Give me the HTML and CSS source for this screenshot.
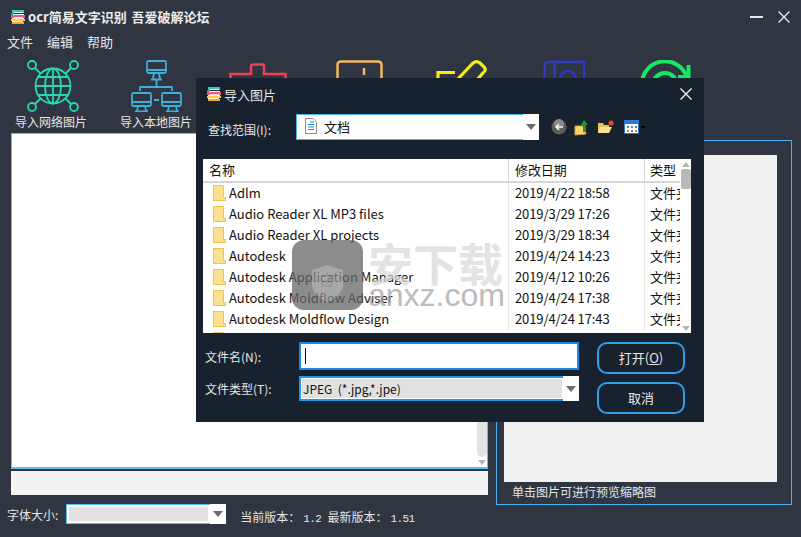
FILE: index.html
```html
<!DOCTYPE html>
<html>
<head>
  <title>ocr简易文字识别</title>
  <link rel="stylesheet" href="styles.css">
</head>
<body>
  <svg class="defs" width="0" height="0">
    <symbol id="logo" viewBox="0 0 14 14">
      <rect x="1" y="0" width="12" height="3" fill="#35c9b5"/>
      <rect x="3" y="2" width="9" height="1" fill="#dff"/>
      <rect x="0" y="3" width="3" height="2" fill="#2f8f96"/>
      <rect x="2" y="4" width="11" height="1" fill="#dfe"/>
      <rect x="0" y="5" width="14" height="3" fill="#f2557e"/>
      <rect x="3" y="7" width="9" height="1" fill="#fdd"/>
      <rect x="1" y="8" width="12" height="1" fill="#eee"/>
      <rect x="0" y="9" width="14" height="2" fill="#f8cd55"/>
      <rect x="1" y="11" width="11" height="1" fill="#fff2c0"/>
      <rect x="1" y="12" width="12" height="2" fill="#f5a73e"/>
    </symbol>
    <symbol id="folder" viewBox="0 0 13 16">
      <path d="M0 0H11V12H13V16H0Z" fill="#fbe08f"/>
      <path d="M.5 .5H10.5V12.5H12.5V15.5H.5Z" fill="none" stroke="#eec24e"/>
    </symbol>
  </svg>

  <div class="app">
    <div class="titlebar">
      <svg class="logo" width="14" height="14"><use href="#logo"/></svg>
      <span class="title">ocr简易文字识别 吾爱破解论坛</span>
      <span class="win-min"></span>
      <svg class="win-close" width="12" height="12" viewBox="0 0 12 12"><path d="M.5 .5L11.5 11.5M11.5 .5L.5 11.5" stroke="#e8e8e8" stroke-width="1.4"/></svg>
    </div>

    <div class="menu">
      <span>文件</span>
      <span>编辑</span>
      <span>帮助</span>
    </div>

    <div class="toolbar">
      <div class="tool">
        <svg width="52" height="52" viewBox="0 0 52 52" fill="none" stroke="#2ad6b6" stroke-width="1.8">
          <circle cx="26" cy="26" r="17.5"/>
          <ellipse cx="26" cy="26" rx="8" ry="17.5"/>
          <path d="M26 8.5V43.5M8.500 26H43.500M11 17H41M11 35H41"/>
          <circle cx="5" cy="5" r="4"/>
          <circle cx="47" cy="5" r="4"/>
          <circle cx="5" cy="47" r="4"/>
          <circle cx="47" cy="47" r="4"/>
          <path d="M8 8L14 14M44 8L38 14M8 44L14 38M44 44L38 38"/>
        </svg>
        <span>导入网络图片</span>
      </div>
      <div class="tool">
        <svg width="52" height="52" viewBox="0 0 52 52" fill="none" stroke="#3eafd6" stroke-width="1.800">
          <rect x="16" y="1" width="19" height="12" rx="1.500"/>
          <path d="M16 10H35M23 13L22 19M28 13L29 19M20 19.500H31M25.500 20V26M9 31V27H41V31"/>
          <rect x="1" y="33" width="19" height="13" rx="1.500"/>
          <rect x="31" y="33" width="19" height="13" rx="1.500"/>
          <path d="M1 42H20M31 42H50M7 46L6 51M14 46L15 51M4 51.500H17M38 46L37 51M45 46L46 51M35 51.500H48M23 40H28"/>
        </svg>
        <span>导入本地图片</span>
      </div>
      <div class="tool">
        <svg width="58" height="52" viewBox="0 0 58 52" fill="none" stroke="#ee4058" stroke-width="2.500">
          <path d="M1.500 24V14H22V6Q22 4.500 24 4.500H33Q35 4.500 35 6V14H56.500V24"/>
        </svg>
      </div>
      <div class="tool">
        <svg width="48" height="52" viewBox="0 0 48 52" fill="none" stroke="#f5b95d" stroke-width="2.500">
          <path d="M1.500 24V5Q1.500 1.500 5 1.500H42Q45.500 1.500 45.500 5V24"/>
          <path d="M28 8V15"/>
        </svg>
      </div>
      <div class="tool">
        <svg width="52" height="52" viewBox="0 0 52 52" fill="none" stroke="#f6ef0f" stroke-width="3.200">
          <path d="M3 24V12.500H20"/>
          <path d="M22 20L37 4Q41 0 45 3L49 7Q52 10 48 13L42 20"/>
        </svg>
      </div>
      <div class="tool">
        <svg width="44" height="52" viewBox="0 0 44 52" fill="none" stroke="#3339c6" stroke-width="2.400">
          <path d="M1.500 22V6Q1.500 2 5.500 2H41V22M11.500 2V22"/>
          <circle cx="25" cy="19" r="8"/>
        </svg>
      </div>
      <div class="tool">
        <svg width="52" height="52" viewBox="0 0 52 52" fill="none" stroke="#16e765" stroke-width="4">
          <path d="M3 26A23 23 0 0 1 47 15"/>
          <path d="M49.500 5V17H39"/>
          <circle cx="26" cy="25" r="12"/>
        </svg>
      </div>
    </div>

    <div class="work">
      <div class="left">
        <div class="editor">
          <div class="vscroll">
            <div class="thumb"></div>
            <div class="arrow"></div>
          </div>
        </div>
        <div class="status"></div>
        <div class="footer">
          <span>字体大小:</span>
          <div class="combo font-combo">
            <div class="combo-field"></div>
            <div class="combo-btn"><i></i></div>
          </div>
          <span class="version">当前版本：<span class="num">1.2</span>最新版本：<span class="num">1.51</span></span>
        </div>
      </div>
      <div class="preview">
        <div class="preview-img"></div>
        <div class="preview-tip">单击图片可进行预览缩略图</div>
      </div>
    </div>

    <!-- 导入图片对话框 -->
    <div class="dialog">
      <div class="dlg-title">
        <svg width="14" height="14"><use href="#logo"/></svg>
        <span>导入图片</span>
        <svg class="dlg-close" width="12" height="12" viewBox="0 0 12 12"><path d="M.5 .5L11.5 11.5M11.5 .5L.5 11.5" stroke="#f0f0f0" stroke-width="1.400"/></svg>
      </div>

      <div class="look-row">
        <span class="look-label">查找范围(I):</span>
        <div class="combo look-combo">
          <div class="look-field">
            <svg width="12" height="16" viewBox="0 0 12 16">
              <path d="M.5 .5H8L11.500 4V15.500H.5Z" fill="#fff" stroke="#8a8a8a"/>
              <path d="M5 4H9M3 6.500H9M3 9H9M3 11.500H9" stroke="#1e8fdc" stroke-width="1.200"/>
            </svg>
            <span>文档</span>
          </div>
          <div class="combo-btn"><i></i></div>
        </div>
        <div class="look-tools">
          <svg width="16" height="16" viewBox="0 0 16 16">
            <circle cx="8" cy="8" r="7.500" fill="#5c5c5c"/>
            <circle cx="8" cy="5" r="5" fill="#8a8a8a"/>
            <path d="M12 8H5M8 5L5 8L8 11" fill="none" stroke="#f2f2f2" stroke-width="1.500"/>
          </svg>
          <svg width="16" height="17" viewBox="0 0 16 17">
            <path d="M1 7H10L12 15L1 16Z" fill="#f6d469" stroke="#c9a43a"/>
            <path d="M10 1L14 6H12V13H9V6H7Z" fill="#1f9a2a"/>
          </svg>
          <svg width="17" height="14" viewBox="0 0 17 14">
            <path d="M1 3H6L7 5H12V13H1Z" fill="#e6c25a"/>
            <path d="M3 7H15L12 13H1Z" fill="#fbe08f"/>
            <circle cx="14" cy="3" r="2.500" fill="#e8501c"/>
          </svg>
          <div class="view-btn">
            <svg width="15" height="14" viewBox="0 0 15 14">
              <rect x=".5" y=".5" width="14" height="13" fill="#fff" stroke="#2a78d2"/>
              <rect x="1" y="1" width="13" height="3" fill="#2a78d2"/>
              <path d="M3 6H5V8H3ZM7 6H9V8H7Z" fill="#5a78b8"/>
              <path d="M11 6H13V8H11Z" fill="#3a9a4a"/>
              <path d="M3 10H5V12H3Z" fill="#e87a30"/>
              <path d="M7 10H9V12H7Z" fill="#5a78b8"/>
              <path d="M11 10H13V12H11Z" fill="#e87a30"/>
            </svg>
            <i></i>
          </div>
        </div>
      </div>

      <div class="filelist">
        <div class="row head">
          <div class="c-name">名称</div>
          <div class="c-date">修改日期</div>
          <div class="c-type">类型</div>
        </div>
        <div class="row"><div class="c-name"><svg width="13" height="16"><use href="#folder"/></svg>Adlm</div><div class="c-date">2019/4/22 18:58</div><div class="c-type">文件夹</div></div>
        <div class="row"><div class="c-name"><svg width="13" height="16"><use href="#folder"/></svg>Audio Reader XL MP3 files</div><div class="c-date">2019/3/29 17:26</div><div class="c-type">文件夹</div></div>
        <div class="row"><div class="c-name"><svg width="13" height="16"><use href="#folder"/></svg>Audio Reader XL projects</div><div class="c-date">2019/3/29 18:34</div><div class="c-type">文件夹</div></div>
        <div class="row"><div class="c-name"><svg width="13" height="16"><use href="#folder"/></svg>Autodesk</div><div class="c-date">2019/4/24 14:23</div><div class="c-type">文件夹</div></div>
        <div class="row"><div class="c-name"><svg width="13" height="16"><use href="#folder"/></svg>Autodesk Application Manager</div><div class="c-date">2019/4/12 10:26</div><div class="c-type">文件夹</div></div>
        <div class="row"><div class="c-name"><svg width="13" height="16"><use href="#folder"/></svg>Autodesk Moldflow Adviser</div><div class="c-date">2019/4/24 17:38</div><div class="c-type">文件夹</div></div>
        <div class="row"><div class="c-name"><svg width="13" height="16"><use href="#folder"/></svg>Autodesk Moldflow Design</div><div class="c-date">2019/4/24 17:43</div><div class="c-type">文件夹</div></div>
        <div class="row"><div class="c-name"><svg width="13" height="16"><use href="#folder"/></svg></div></div>
        <div class="list-scroll">
          <div class="arrow up"></div>
          <div class="list-thumb"></div>
          <div class="arrow"></div>
        </div>
      </div>

      <div class="dlg-bottom">
        <div class="dlg-fields">
          <div class="field-row">
            <span class="field-label">文件名(N):</span>
            <div class="name-input"><i></i></div>
          </div>
          <div class="field-row">
            <span class="field-label">文件类型(T):</span>
            <div class="combo type-combo">
              <div class="combo-field">JPEG&nbsp; (*.jpg,*.jpe)</div>
              <div class="combo-btn"><i></i></div>
            </div>
          </div>
        </div>
        <div class="dlg-btns">
          <div class="btn">打开(<u>O</u>)</div>
          <div class="btn">取消</div>
        </div>
      </div>
    </div>

    <!-- 水印 -->
    <div class="mark">
      <svg class="mark-lock" width="71" height="70" viewBox="0 0 71 70">
        <rect width="71" height="70" rx="12" fill="#666"/>
        <path d="M35 25L51 30V44Q51 55 35 62Q20 55 20 44V30Z" fill="#8c8c8c"/>
        <path d="M29 36H41M35 32V36M30 42H40V46H30Z" fill="none" stroke="#777" stroke-width="1.500"/>
      </svg>
      <div class="mark-text">
        <div class="mark-cn">安下载</div>
        <div class="mark-en">anxz.com</div>
      </div>
    </div>
  </div>
</body>
</html>
```

FILE: styles.css
```css
* {
  box-sizing: border-box;
}
html, body {
  margin: 0;
  padding: 0;
  overflow: hidden;
}
body {
  font-family: "Noto Sans CJK SC", "Noto Sans", sans-serif;
  font-size: 12px;
  color: #e6e6e6;
  background-color: #2f3541;
}
.defs {
  position: absolute;
}
.app {
  position: relative;
  width: 801px;
  height: 537px;
  overflow: hidden;
  background-color: #2f3541;
}

/* 标题栏和菜单 */
.titlebar {
  display: flex;
  align-items: center;
  height: 32px;
  padding: 1px 11px 0 11px;
}
.title {
  margin-left: 3px;
  font-size: 13px;
  font-weight: 700;
  word-spacing: 2px;
  color: #ececec;
  white-space: nowrap;
}
.win-min {
  width: 13px;
  height: 2px;
  margin-left: auto;
  background-color: #e8e8e8;
}
.win-close {
  margin-left: 15px;
}
.menu {
  display: flex;
  gap: 14px;
  height: 20px;
  padding-left: 7px;
  font-size: 13px;
  line-height: 20px;
}

/* 工具栏 */
.toolbar {
  display: flex;
  height: 81px;
  padding: 8px 0 0 2px;
}
.tool {
  display: flex;
  flex-direction: column;
  align-items: center;
  gap: 1px;
  width: 102px;
}
.tool span {
  line-height: 18px;
  white-space: nowrap;
}
.tool:nth-child(1) span {
  margin-right: 4px;
}
.tool:nth-child(2) span {
  margin-left: 2px;
}
.tool:nth-child(2) svg {
  margin-left: 4px;
}
.tool:nth-child(3) svg,
.tool:nth-child(4) svg {
  margin-left: 2px;
}
.tool:nth-child(6) svg {
  margin-left: 4px;
}

/* 主区域 */
.work {
  display: flex;
  align-items: flex-start;
  gap: 8px;
  padding-left: 11px;
}
.left {
  width: 477px;
}
.editor {
  position: relative;
  height: 336px;
  border: 1px solid #5cc0f5;
  border-bottom-width: 2px;
  background-color: #fff;
}
.vscroll {
  position: absolute;
  top: 0;
  right: 0;
  bottom: 0;
  width: 11px;
  display: flex;
  flex-direction: column;
  justify-content: flex-end;
  align-items: center;
}
.thumb {
  width: 10px;
  height: 120px;
  margin-bottom: 3px;
  border-radius: 0 0 5px 5px;
  background-color: #e2e2e2;
}
.arrow {
  width: 0;
  height: 0;
  margin-bottom: 2px;
  border-left: 4px solid transparent;
  border-right: 4px solid transparent;
  border-top: 5px solid #b5b5b5;
}
.arrow.up {
  margin: 3px 0 2px;
  border-top: 0;
  border-bottom: 5px solid #b5b5b5;
}
.status {
  height: 24px;
  margin-top: 2px;
  background-color: #f3f3f3;
}
.footer {
  display: flex;
  align-items: center;
  height: 20px;
  margin: 9px 0 0 -4px;
}
.version {
  margin: 5px 0 0 14px;
  font-size: 12px;
  white-space: nowrap;
}
.num {
  margin: 0 6px 0 3px;
  font-family: "Liberation Mono", monospace;
  font-size: 11px;
  letter-spacing: -.6px;
}

/* 下拉框 */
.combo {
  display: flex;
  background-color: #fff;
}
.combo-field {
  flex: 1;
  height: 100%;
  border: 1px solid #5cc0f5;
  border-width: 1px 0 1px 1px;
  box-shadow: inset 0 0 0 2px #fff;
  background-color: #e1e1e1;
}
.combo-btn {
  display: flex;
  align-items: center;
  justify-content: center;
  width: 16px;
  background-color: #fff;
}
.combo-btn i {
  width: 0;
  height: 0;
  border-left: 5px solid transparent;
  border-right: 5px solid transparent;
  border-top: 6px solid #6b6b6b;
}
.font-combo {
  width: 160px;
  height: 20px;
  margin-left: 8px;
}

/* 预览 */
.preview {
  width: 296px;
  height: 365px;
  margin-top: 7px;
  padding: 14px 0 0 7px;
  border: 1px solid #4aaef0;
}
.preview-img {
  width: 273px;
  height: 327px;
  background-color: #f0f0f0;
}
.preview-tip {
  margin: 1px 0 0 8px;
  line-height: 18px;
}

/* 对话框 */
.dialog {
  position: absolute;
  left: 196px;
  top: 78px;
  width: 508px;
  height: 344px;
  background-color: #18222f;
}
.dlg-title {
  display: flex;
  align-items: center;
  gap: 3px;
  height: 34px;
  padding: 0 12px 2px 11px;
  font-size: 13px;
}
.dlg-close {
  margin-left: auto;
  margin-right: 0;
}
.look-row {
  display: flex;
  align-items: center;
  height: 26px;
  margin-top: 2px;
  padding-left: 12px;
}
.look-label {
  width: 88px;
  padding-top: 4px;
}
.look-combo {
  width: 243px;
  height: 26px;
}
.look-field {
  display: flex;
  align-items: center;
  gap: 7px;
  flex: 1;
  padding: 0 0 2px 8px;
  border: 1px solid #4ab4f0;
  border-right: 0;
  color: #111;
  font-size: 13px;
}
.look-tools {
  display: flex;
  align-items: center;
  gap: 7px;
  margin-left: 12px;
}
.view-btn {
  display: flex;
  align-items: center;
  gap: 1px;
  margin-left: 3px;
}
.view-btn i {
  width: 0;
  height: 0;
  border-left: 3px solid transparent;
  border-right: 3px solid transparent;
  border-top: 3px solid #000;
}

/* 文件列表 */
.filelist {
  position: relative;
  width: 488px;
  height: 174px;
  margin: 19px 0 0 7px;
  overflow: hidden;
  background-color: #fff;
  color: #111;
  font-size: 13px;
}
.row {
  display: flex;
  height: 21px;
  line-height: 19px;
}
.row.head {
  height: 24px;
  line-height: 21px;
  border-bottom: 2px solid #d6d6d6;
}
.c-name {
  display: flex;
  align-items: center;
  gap: 3px;
  width: 305px;
  padding: 0 0 2px 10px;
  white-space: nowrap;
}
.head .c-name {
  padding-left: 6px;
}
.c-date {
  width: 136px;
  padding-left: 6px;
  border-left: 1px solid #e8e8e8;
  letter-spacing: -.1px;
  white-space: nowrap;
}
.c-type {
  padding-left: 5px;
  border-left: 1px solid #e8e8e8;
  white-space: nowrap;
}
.head .c-date,
.head .c-type {
  border-left-color: #d6d6d6;
}
.list-scroll {
  position: absolute;
  top: 0;
  right: 0;
  bottom: 0;
  width: 11px;
  display: flex;
  flex-direction: column;
  align-items: center;
  background-color: #fff;
}
.list-thumb {
  width: 10px;
  height: 20px;
  margin-bottom: auto;
  border-radius: 2px;
  background-color: #b9b9b9;
}

/* 文件名和按钮 */
.dlg-bottom {
  display: flex;
  margin-top: 9px;
  padding-left: 9px;
}
.dlg-fields {
  width: 374px;
}
.field-row {
  display: flex;
  align-items: center;
  margin-bottom: 6px;
}
.field-label {
  width: 94px;
  white-space: nowrap;
}
.name-input {
  width: 280px;
  height: 28px;
  padding: 4px;
  border: 2px solid #1f87e0;
  background-color: #fff;
}
.name-input i {
  display: block;
  width: 1px;
  height: 16px;
  background-color: #000;
}
.type-combo {
  width: 280px;
  height: 25px;
  color: #111;
}
.type-combo .combo-field {
  padding: 0 0 0 2px;
  line-height: 21px;
  border-width: 2px 0 2px 2px;
  border-color: #1f9ae8;
  box-shadow: inset 0 0 0 1px #fff;
}
.dlg-btns {
  display: flex;
  flex-direction: column;
  gap: 8px;
  margin-left: 18px;
}
.btn {
  width: 88px;
  height: 32px;
  border: 2px solid #2f9fe8;
  border-radius: 10px;
  text-align: center;
  font-size: 13px;
  line-height: 28px;
}

/* 水印 */
.mark {
  position: absolute;
  left: 292px;
  top: 240px;
  display: flex;
  gap: 5px;
  pointer-events: none;
}
.mark-lock {
  opacity: .75;
}
.mark-cn {
  font-size: 45px;
  font-weight: 700;
  line-height: 45px;
  color: #d8d8d8;
  opacity: .7;
  white-space: nowrap;
}
.mark-en {
  margin-top: -6px;
  font-family: "Liberation Sans", sans-serif;
  font-size: 32px;
  line-height: 32px;
  color: #a0a0a0;
  opacity: .7;
  white-space: nowrap;
}
```
